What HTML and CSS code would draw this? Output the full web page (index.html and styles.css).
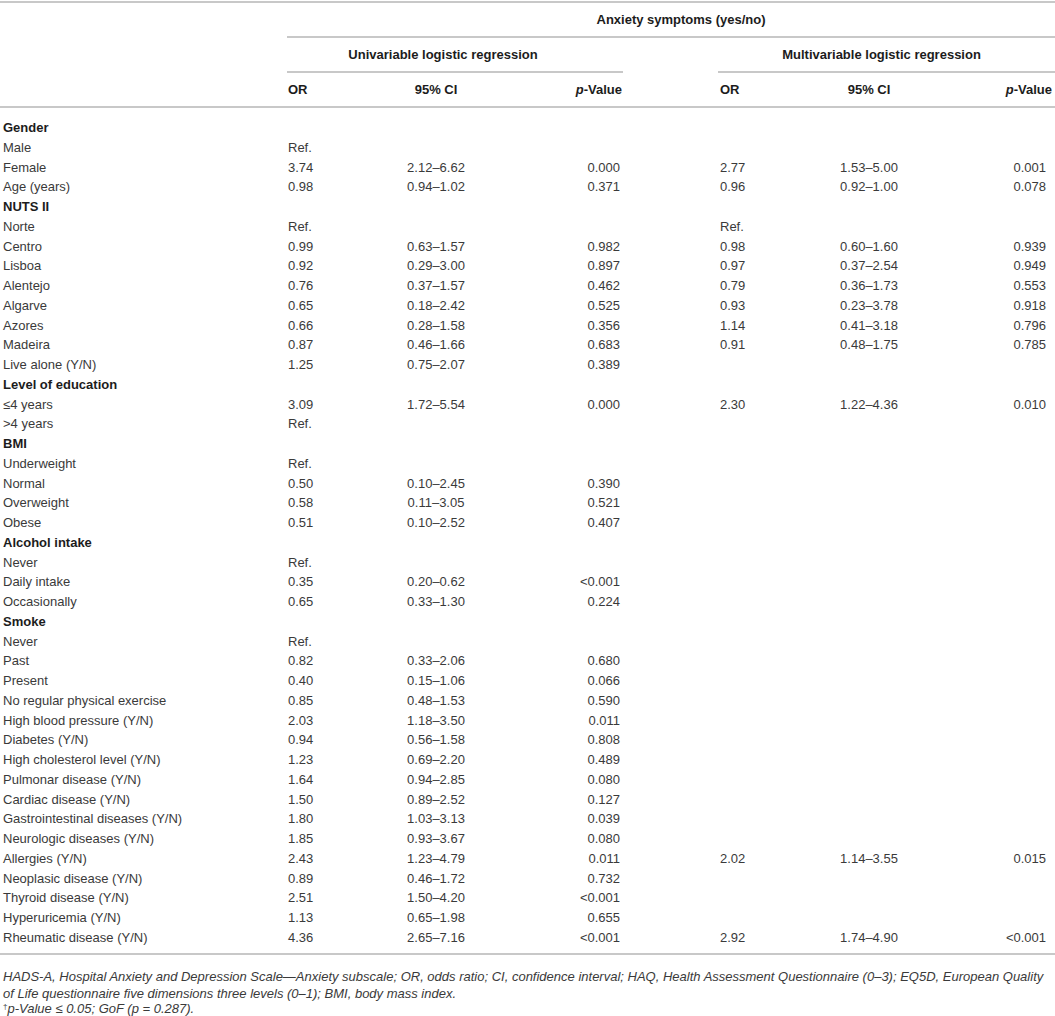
FILE: index.html
```html
<!DOCTYPE html>
<html>
<head>
<meta charset="utf-8">
<link rel="stylesheet" href="styles.css">
</head>
<body>
<table class="tbl">
  <colgroup>
    <col class="c-label">
    <col class="c-or1">
    <col class="c-ci1">
    <col class="c-p1">
    <col class="c-gap">
    <col class="c-or2">
    <col class="c-ci2">
    <col class="c-p2">
  </colgroup>
  <thead>
    <tr class="h1">
      <th rowspan="3" class="blank"></th>
      <th colspan="7" class="anx">Anxiety symptoms (yes/no)</th>
    </tr>
    <tr class="h2">
      <th colspan="3" class="uni">Univariable logistic regression</th>
      <th class="gap"></th>
      <th colspan="3" class="multi">Multivariable logistic regression</th>
    </tr>
    <tr class="h3">
      <th class="or1">OR</th>
      <th class="ci">95% CI</th>
      <th class="p1"><i>p</i>-Value</th>
      <th class="gap"></th>
      <th class="or2">OR</th>
      <th class="ci">95% CI</th>
      <th class="p2"><i>p</i>-Value</th>
    </tr>
  </thead>
  <tbody>
    <tr class="sec"><td>Gender</td><td></td><td></td><td></td><td></td><td></td><td></td><td></td></tr>
    <tr><td>Male</td><td>Ref.</td><td></td><td></td><td></td><td></td><td></td><td></td></tr>
    <tr><td>Female</td><td>3.74</td><td>2.12–6.62</td><td>0.000</td><td></td><td>2.77</td><td>1.53–5.00</td><td>0.001</td></tr>
    <tr><td>Age (years)</td><td>0.98</td><td>0.94–1.02</td><td>0.371</td><td></td><td>0.96</td><td>0.92–1.00</td><td>0.078</td></tr>
    <tr class="sec"><td>NUTS II</td><td></td><td></td><td></td><td></td><td></td><td></td><td></td></tr>
    <tr><td>Norte</td><td>Ref.</td><td></td><td></td><td></td><td>Ref.</td><td></td><td></td></tr>
    <tr><td>Centro</td><td>0.99</td><td>0.63–1.57</td><td>0.982</td><td></td><td>0.98</td><td>0.60–1.60</td><td>0.939</td></tr>
    <tr><td>Lisboa</td><td>0.92</td><td>0.29–3.00</td><td>0.897</td><td></td><td>0.97</td><td>0.37–2.54</td><td>0.949</td></tr>
    <tr><td>Alentejo</td><td>0.76</td><td>0.37–1.57</td><td>0.462</td><td></td><td>0.79</td><td>0.36–1.73</td><td>0.553</td></tr>
    <tr><td>Algarve</td><td>0.65</td><td>0.18–2.42</td><td>0.525</td><td></td><td>0.93</td><td>0.23–3.78</td><td>0.918</td></tr>
    <tr><td>Azores</td><td>0.66</td><td>0.28–1.58</td><td>0.356</td><td></td><td>1.14</td><td>0.41–3.18</td><td>0.796</td></tr>
    <tr><td>Madeira</td><td>0.87</td><td>0.46–1.66</td><td>0.683</td><td></td><td>0.91</td><td>0.48–1.75</td><td>0.785</td></tr>
    <tr><td>Live alone (Y/N)</td><td>1.25</td><td>0.75–2.07</td><td>0.389</td><td></td><td></td><td></td><td></td></tr>
    <tr class="sec"><td>Level of education</td><td></td><td></td><td></td><td></td><td></td><td></td><td></td></tr>
    <tr><td>≤4 years</td><td>3.09</td><td>1.72–5.54</td><td>0.000</td><td></td><td>2.30</td><td>1.22–4.36</td><td>0.010</td></tr>
    <tr><td>&gt;4 years</td><td>Ref.</td><td></td><td></td><td></td><td></td><td></td><td></td></tr>
    <tr class="sec"><td>BMI</td><td></td><td></td><td></td><td></td><td></td><td></td><td></td></tr>
    <tr><td>Underweight</td><td>Ref.</td><td></td><td></td><td></td><td></td><td></td><td></td></tr>
    <tr><td>Normal</td><td>0.50</td><td>0.10–2.45</td><td>0.390</td><td></td><td></td><td></td><td></td></tr>
    <tr><td>Overweight</td><td>0.58</td><td>0.11–3.05</td><td>0.521</td><td></td><td></td><td></td><td></td></tr>
    <tr><td>Obese</td><td>0.51</td><td>0.10–2.52</td><td>0.407</td><td></td><td></td><td></td><td></td></tr>
    <tr class="sec"><td>Alcohol intake</td><td></td><td></td><td></td><td></td><td></td><td></td><td></td></tr>
    <tr><td>Never</td><td>Ref.</td><td></td><td></td><td></td><td></td><td></td><td></td></tr>
    <tr><td>Daily intake</td><td>0.35</td><td>0.20–0.62</td><td>&lt;0.001</td><td></td><td></td><td></td><td></td></tr>
    <tr><td>Occasionally</td><td>0.65</td><td>0.33–1.30</td><td>0.224</td><td></td><td></td><td></td><td></td></tr>
    <tr class="sec"><td>Smoke</td><td></td><td></td><td></td><td></td><td></td><td></td><td></td></tr>
    <tr><td>Never</td><td>Ref.</td><td></td><td></td><td></td><td></td><td></td><td></td></tr>
    <tr><td>Past</td><td>0.82</td><td>0.33–2.06</td><td>0.680</td><td></td><td></td><td></td><td></td></tr>
    <tr><td>Present</td><td>0.40</td><td>0.15–1.06</td><td>0.066</td><td></td><td></td><td></td><td></td></tr>
    <tr><td>No regular physical exercise</td><td>0.85</td><td>0.48–1.53</td><td>0.590</td><td></td><td></td><td></td><td></td></tr>
    <tr><td>High blood pressure (Y/N)</td><td>2.03</td><td>1.18–3.50</td><td>0.011</td><td></td><td></td><td></td><td></td></tr>
    <tr><td>Diabetes (Y/N)</td><td>0.94</td><td>0.56–1.58</td><td>0.808</td><td></td><td></td><td></td><td></td></tr>
    <tr><td>High cholesterol level (Y/N)</td><td>1.23</td><td>0.69–2.20</td><td>0.489</td><td></td><td></td><td></td><td></td></tr>
    <tr><td>Pulmonar disease (Y/N)</td><td>1.64</td><td>0.94–2.85</td><td>0.080</td><td></td><td></td><td></td><td></td></tr>
    <tr><td>Cardiac disease (Y/N)</td><td>1.50</td><td>0.89–2.52</td><td>0.127</td><td></td><td></td><td></td><td></td></tr>
    <tr><td>Gastrointestinal diseases (Y/N)</td><td>1.80</td><td>1.03–3.13</td><td>0.039</td><td></td><td></td><td></td><td></td></tr>
    <tr><td>Neurologic diseases (Y/N)</td><td>1.85</td><td>0.93–3.67</td><td>0.080</td><td></td><td></td><td></td><td></td></tr>
    <tr><td>Allergies (Y/N)</td><td>2.43</td><td>1.23–4.79</td><td>0.011</td><td></td><td>2.02</td><td>1.14–3.55</td><td>0.015</td></tr>
    <tr><td>Neoplasic disease (Y/N)</td><td>0.89</td><td>0.46–1.72</td><td>0.732</td><td></td><td></td><td></td><td></td></tr>
    <tr><td>Thyroid disease (Y/N)</td><td>2.51</td><td>1.50–4.20</td><td>&lt;0.001</td><td></td><td></td><td></td><td></td></tr>
    <tr><td>Hyperuricemia (Y/N)</td><td>1.13</td><td>0.65–1.98</td><td>0.655</td><td></td><td></td><td></td><td></td></tr>
    <tr><td>Rheumatic disease (Y/N)</td><td>4.36</td><td>2.65–7.16</td><td>&lt;0.001</td><td></td><td>2.92</td><td>1.74–4.90</td><td>&lt;0.001</td></tr>
  </tbody>
</table>
<div class="notes">
  <p class="note">HADS-A, Hospital Anxiety and Depression Scale—Anxiety subscale; OR, odds ratio; CI, confidence interval; HAQ, Health Assessment Questionnaire (0–3); EQ5D, European Quality<br>of Life questionnaire five dimensions three levels (0–1); BMI, body mass index.</p>
  <p class="note note-last"><span class="dag">†</span>p-Value ≤ 0.05; GoF (p = 0.287).</p>
</div>
</body>
</html>
```
FILE: styles.css
```css
html, body {
  margin: 0;
  padding: 0;
  background: #ffffff;
}
body {
  font-family: "Liberation Sans", Arial, sans-serif;
  color: #3a3a3a;
  width: 1055px;
}
.tbl {
  width: 1055px;
  table-layout: fixed;
  border-collapse: collapse;
  border-top: 2px solid #c8c8c8;
  margin-top: 1px;
  font-size: 13px;
}
.c-label { width: 287px; }
.c-or1 { width: 93px; }
.c-ci1 { width: 112px; }
.c-p1 { width: 131px; }
.c-gap { width: 95px; }
.c-or2 { width: 94px; }
.c-ci2 { width: 114px; }
.c-p2 { width: 129px; }

thead th {
  font-weight: bold;
  color: #1c1c1c;
  padding: 0;
  height: 33px;
  line-height: 16px;
  vertical-align: middle;
}
thead th i { font-style: italic; }
.anx {
  text-align: center;
  padding-left: 20px;
  border-bottom: 2px solid #c8c8c8;
}
.uni {
  text-align: center;
  padding-right: 24px;
  border-bottom: 2px solid #c8c8c8;
}
.multi {
  text-align: center;
  padding-right: 10px;
  border-bottom: 2px solid #c8c8c8;
}
.h3 th { border-bottom: 2px solid #c8c8c8; }
.blank { border-bottom: 2px solid #c8c8c8; }
.or1 { text-align: left; padding-left: 1px; }
.or2 { text-align: left; padding-left: 2px; }
.ci { text-align: center; }
.p1 { text-align: right; padding-right: 1px; }
.p2 { text-align: right; padding-right: 3px; }

tbody td {
  padding: 0;
  height: 19.75px;
  line-height: 19.75px;
  white-space: nowrap;
}
tbody tr:first-child td { padding-top: 10px; }
tbody tr:last-child td { padding-bottom: 5px; border-bottom: 2px solid #c8c8c8; }
tbody td:nth-child(1) { padding-left: 3px; }
tbody td:nth-child(2) { padding-left: 1px; }
tbody td:nth-child(3) { text-align: center; }
tbody td:nth-child(4) { text-align: right; padding-right: 3px; }
tbody td:nth-child(6) { padding-left: 2px; }
tbody td:nth-child(7) { text-align: center; }
tbody td:nth-child(8) { text-align: right; padding-right: 9px; }
tbody tr.sec td { font-weight: bold; color: #1c1c1c; }

.notes {
  padding: 13px 0 0 3px;
  font-size: 13px;
  font-style: italic;
  color: #3a3a3a;
}
.note {
  margin: 0;
  line-height: 17px;
}
.note-last {
  line-height: 14px;
}
.dag {
  font-size: 8px;
  font-style: normal;
  vertical-align: 4px;
  line-height: 0;
}
```
